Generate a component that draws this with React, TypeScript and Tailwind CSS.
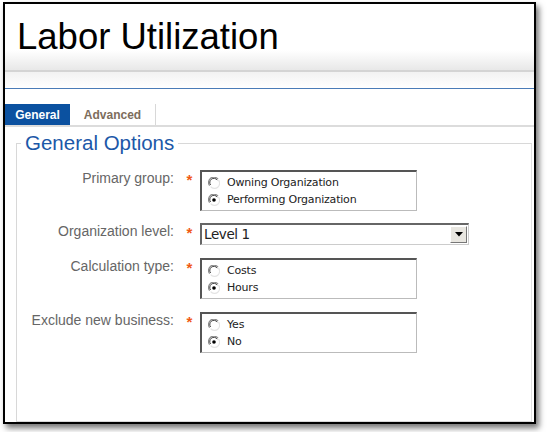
import React from 'react';

type Option = { label: string; checked?: boolean };

const Radio: React.FC<{ checked?: boolean }> = ({ checked }) => (
  <svg width="12" height="12" viewBox="0 0 12 12" className="shrink-0">
    <circle cx="6" cy="6" r="5.5" fill="#fff" />
    <path d="M10 2.2A5 5 0 0 0 1.6 8.6" fill="none" stroke="#8a8a8a" strokeWidth="1.2" />
    <path d="M9.2 3A4 4 0 0 0 2.6 8" fill="none" stroke="#404040" strokeWidth="1" />
    <path d="M2.6 9.6A5 5 0 0 0 10.4 3" fill="none" stroke="#e4e4e4" strokeWidth="1.2" />
    {checked && <circle cx="6" cy="6" r="1.8" fill="#000" />}
  </svg>
);

const RadioBox: React.FC<{ options: Option[] }> = ({ options }) => (
  <div className="w-[217px] h-[41px] border-t-2 border-l-2 border-t-[#555] border-l-[#555] border-r border-b border-r-[#bbb] border-b-[#bbb] bg-white pl-[6px] pt-[4px] flex flex-col gap-[4px]">
    {options.map((o, i) => (
      <label key={i} className="flex items-center gap-[7px] text-[11px] leading-[13px] text-[#222] font-['DejaVu_Sans',sans-serif] tracking-[-0.2px]">
        <Radio checked={o.checked} />
        <span>{o.label}</span>
      </label>
    ))}
  </div>
);

const Row: React.FC<{ label: string; children: React.ReactNode }> = ({ label, children }) => (
  <div className="flex items-start">
    <div className="w-[159px] text-right pr-[2px] text-[14px] leading-[16px] text-[#666]">{label}</div>
    <div className="w-[24px] text-center text-[#f05a14] text-[15px] leading-[16px] font-bold pt-[2px] pl-[3px]">*</div>
    {children}
  </div>
);

export default function App() {
  return (
    <div className="w-[547px] h-[432px] bg-white pt-[2px] pl-[3px] font-['Liberation_Sans',Arial,sans-serif]">
      <div className="w-[533px] h-[422px] border-2 border-black shadow-[3px_4px_6px_rgba(0,0,0,0.55)] flex flex-col overflow-hidden bg-white">
        <div className="h-[68px] shrink-0 bg-gradient-to-b from-white from-70% to-[#e8e8e8] border-b-2 border-[#d4d4d4] pl-[12px] pt-[13px]">
          <h1 className="text-[36.5px] leading-[40px] text-black">Labor Utilization</h1>
        </div>
        <div className="h-[17px] shrink-0 bg-gradient-to-b from-[#f2f2f2] to-white border-b border-[#4a7bb7]" />
        <div className="h-[15px] shrink-0" />
        <div className="flex h-[23px] shrink-0 border-b-2 border-[#dcdcdc]">
          <div className="w-[65px] h-[21px] bg-[#0b51a0] text-white text-[12px] font-bold flex items-center justify-center">General</div>
          <div className="w-[86px] h-[21px] text-[#7d6d5c] text-[12px] font-bold flex items-center justify-center border-r border-[#d8d8d8]">Advanced</div>
        </div>
        <fieldset className="ml-[11px] mr-[2px] mt-[5px] h-[290px] border border-[#d8d8d8] border-r-[#e0e0e0]">
          <legend className="ml-[4px] px-[4px] text-[20.5px] leading-[22px] text-[#1c58a8]">General Options</legend>
          <div className="flex flex-col pt-[16px]">
            <Row label="Primary group:">
              <RadioBox options={[{ label: 'Owning Organization' }, { label: 'Performing Organization', checked: true }]} />
            </Row>
            <div className="h-[12px]" />
            <Row label="Organization level:">
              <div className="w-[269px] h-[22px] border-t-2 border-l-2 border-t-[#666] border-l-[#666] border-r border-b border-r-[#ccc] border-b-[#ccc] bg-white flex items-center justify-between">
                <span className="pl-[2px] text-[13.5px] text-[#222] font-['DejaVu_Sans',sans-serif] tracking-[-0.4px]">Level 1</span>
                <div className="w-[17px] h-[17px] mr-[1px] bg-[#e8e6e0] border border-t-white border-l-white border-r-[#777] border-b-[#777] flex items-center justify-center">
                  <svg width="8" height="5" viewBox="0 0 8 5"><path d="M0 0H8L4 4.5Z" fill="#000" /></svg>
                </div>
              </div>
            </Row>
            <div className="h-[13px]" />
            <Row label="Calculation type:">
              <RadioBox options={[{ label: 'Costs' }, { label: 'Hours', checked: true }]} />
            </Row>
            <div className="h-[13px]" />
            <Row label="Exclude new business:">
              <RadioBox options={[{ label: 'Yes' }, { label: 'No', checked: true }]} />
            </Row>
          </div>
        </fieldset>
      </div>
    </div>
  );
}
